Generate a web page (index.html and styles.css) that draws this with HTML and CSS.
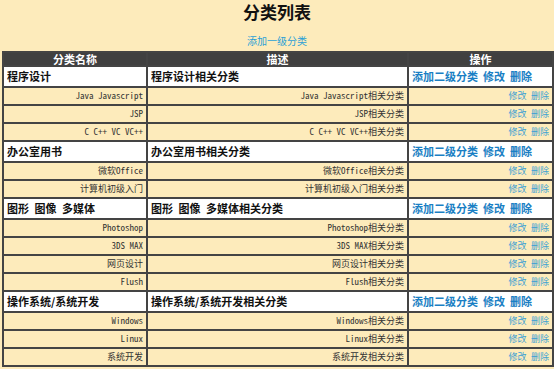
FILE: index.html
```html
<!DOCTYPE html>
<html lang="zh-CN">
<head>
<meta charset="utf-8">
<title>分类列表</title>
<link rel="stylesheet" href="styles.css">
</head>
<body>
<h1 class="title">分类列表</h1>
<div class="add-top"><a href="#">添加一级分类</a></div>
<table class="cat-table">
  <colgroup>
    <col class="c1"><col class="c2"><col class="c3">
  </colgroup>
  <thead>
    <tr class="head"><th>分类名称</th><th>描述</th><th>操作</th></tr>
  </thead>
  <tbody>
    <tr class="main"><td>程序设计</td><td>程序设计相关分类</td><td class="ops"><a href="#">添加二级分类</a>&nbsp;&nbsp;<a href="#">修改</a>&nbsp;&nbsp;<a href="#">删除</a></td></tr>
    <tr class="sub"><td>Java Javascript</td><td>Java Javascript相关分类</td><td><a href="#">修改</a> <a href="#">删除</a></td></tr>
    <tr class="sub"><td>JSP</td><td>JSP相关分类</td><td><a href="#">修改</a> <a href="#">删除</a></td></tr>
    <tr class="sub"><td>C C++ VC VC++</td><td>C C++ VC VC++相关分类</td><td><a href="#">修改</a> <a href="#">删除</a></td></tr>

    <tr class="main"><td>办公室用书</td><td>办公室用书相关分类</td><td class="ops"><a href="#">添加二级分类</a>&nbsp;&nbsp;<a href="#">修改</a>&nbsp;&nbsp;<a href="#">删除</a></td></tr>
    <tr class="sub"><td>微软Office</td><td>微软Office相关分类</td><td><a href="#">修改</a> <a href="#">删除</a></td></tr>
    <tr class="sub"><td>计算机初级入门</td><td>计算机初级入门相关分类</td><td><a href="#">修改</a> <a href="#">删除</a></td></tr>

    <tr class="main"><td>图形 图像 多媒体</td><td>图形 图像 多媒体相关分类</td><td class="ops"><a href="#">添加二级分类</a>&nbsp;&nbsp;<a href="#">修改</a>&nbsp;&nbsp;<a href="#">删除</a></td></tr>
    <tr class="sub"><td>Photoshop</td><td>Photoshop相关分类</td><td><a href="#">修改</a> <a href="#">删除</a></td></tr>
    <tr class="sub"><td>3DS MAX</td><td>3DS MAX相关分类</td><td><a href="#">修改</a> <a href="#">删除</a></td></tr>
    <tr class="sub"><td>网页设计</td><td>网页设计相关分类</td><td><a href="#">修改</a> <a href="#">删除</a></td></tr>
    <tr class="sub"><td>Flush</td><td>Flush相关分类</td><td><a href="#">修改</a> <a href="#">删除</a></td></tr>

    <tr class="main"><td>操作系统/系统开发</td><td>操作系统/系统开发相关分类</td><td class="ops"><a href="#">添加二级分类</a>&nbsp;&nbsp;<a href="#">修改</a>&nbsp;&nbsp;<a href="#">删除</a></td></tr>
    <tr class="sub"><td>Windows</td><td>Windows相关分类</td><td><a href="#">修改</a> <a href="#">删除</a></td></tr>
    <tr class="sub"><td>Linux</td><td>Linux相关分类</td><td><a href="#">修改</a> <a href="#">删除</a></td></tr>
    <tr class="sub"><td>系统开发</td><td>系统开发相关分类</td><td><a href="#">修改</a> <a href="#">删除</a></td></tr>
  </tbody>
</table>
</body>
</html>
```
FILE: styles.css
```css
html, body {
  margin: 0;
  padding: 0;
  background: #fdebbb;
}
body {
  font-family: "Noto Sans CJK SC", "Liberation Sans", sans-serif;
  color: #222;
}
a {
  text-decoration: none;
}
.title {
  margin: 0;
  height: 24px;
  line-height: 24px;
  font-size: 17px;
  font-weight: bold;
  text-align: center;
  color: #111;
}
.add-top {
  margin-top: 10px;
  height: 14px;
  line-height: 14px;
  font-size: 10px;
  text-align: center;
}
.add-top a {
  color: #2a9fd6;
}
.cat-table {
  margin: 3px 2px 0 2px;
  width: 550px;
  table-layout: fixed;
  border-collapse: collapse;
  border: 2px solid #3c3c3c;
}
.c1 { width: 144px; }
.c2 { width: 261px; }
.c3 { width: 145px; }
.cat-table th,
.cat-table td {
  border: 2px solid #444;
  padding: 0 3px;
  white-space: nowrap;
  overflow: hidden;
}
.head th {
  background: #404040;
  color: #fff;
  font-size: 11px;
  font-weight: bold;
  height: 12px;
  line-height: 12px;
  text-align: center;
}
.main td {
  background: #fff;
  font-size: 11px;
  font-weight: bold;
  height: 19px;
  line-height: 19px;
  text-align: left;
  color: #111;
  word-spacing: 3px;
}
.main .ops {
  word-spacing: 0;
}
.main .ops a {
  color: #1a7fc4;
}
.sub td {
  background: #fdebbb;
  font-family: "Noto Sans Mono CJK SC", "Liberation Mono", "Noto Sans CJK SC", monospace;
  font-size: 9px;
  height: 16px;
  line-height: 16px;
  text-align: right;
  color: #333;
}
.sub td a {
  color: #3d9fd4;
}
```
